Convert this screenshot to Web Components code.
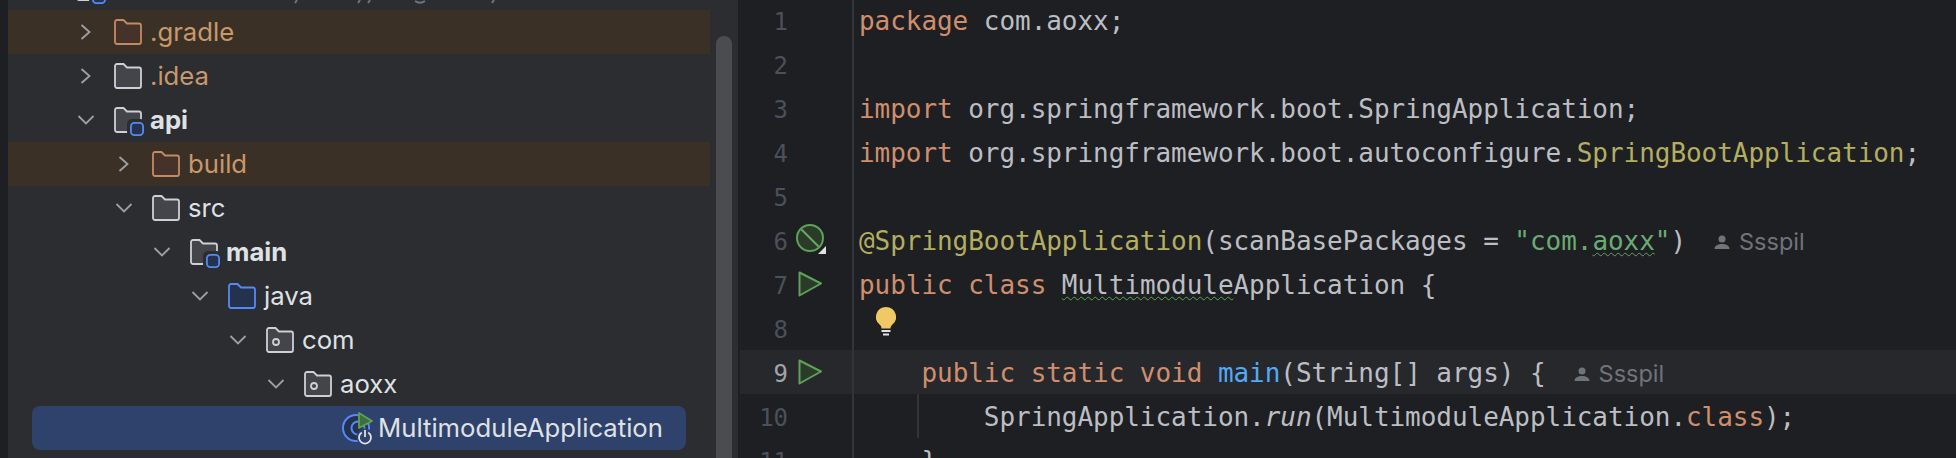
<!DOCTYPE html>
<html>
<head>
<meta charset="utf-8">
<style>
  html, body { margin: 0; height: 100%; background: #1e1f22; overflow: hidden; }
  ide-window { height: 458px; }
</style>
</head>
<body>
<ide-window>
  <project-tree slot="tree">
    <tree-row depth="-1" arrow="none" kind="module"></tree-row>
    <tree-row depth="0" arrow="right" kind="excluded" tone="orange" excluded>.gradle</tree-row>
    <tree-row depth="0" arrow="right" kind="plain" tone="orange">.idea</tree-row>
    <tree-row depth="0" arrow="down" kind="module" bold>api</tree-row>
    <tree-row depth="1" arrow="right" kind="excluded" tone="orange" excluded>build</tree-row>
    <tree-row depth="1" arrow="down" kind="plain">src</tree-row>
    <tree-row depth="2" arrow="down" kind="module" bold>main</tree-row>
    <tree-row depth="3" arrow="down" kind="source">java</tree-row>
    <tree-row depth="4" arrow="down" kind="package">com</tree-row>
    <tree-row depth="5" arrow="down" kind="package">aoxx</tree-row>
    <tree-row depth="6" arrow="none" kind="spring" selected>MultimoduleApplication</tree-row>
  </project-tree>
  <code-editor slot="editor"></code-editor>
</ide-window>

<script>
const FOLDER = 'M1 4A2 2 0 0 1 3 2h6.500l3.500 3.500h12A2 2 0 0 1 27 7.500v16.500a2 2 0 0 1-2 2h-22a2 2 0 0 1-2-2z';
const folder = (fill, stroke) => `<path d="${FOLDER}" fill="${fill}" stroke="${stroke}" stroke-width="1.800"/>`;
const ICONS = {
  plain: folder('#43454a', '#ced0d6'),
  excluded: folder('#45322b', '#c48a62'),
  source: folder('#25324d', '#548af7'),
  module: folder('#43454a', '#ced0d6') + `
    <rect x="13" y="13" width="18" height="18" rx="5" fill="#2b2d30"/>
    <rect x="16.900" y="16.900" width="12.200" height="12.200" rx="3.500" fill="#25324d" stroke="#548af7" stroke-width="1.800"/>`,
  package: folder('#43454a', '#ced0d6') + `
    <circle cx="10" cy="16" r="3" fill="none" stroke="#ced0d6" stroke-width="1.800"/>`,
  spring: `<circle cx="14" cy="14" r="13" fill="#25324d" stroke="#548af7" stroke-width="2"/>
    <circle cx="16" cy="14" r="6.500" fill="none" stroke="#548af7" stroke-width="2"/>
    <path d="M17 -1 30 7 17 14z" fill="#3f6e3b" stroke="#5fa05a" stroke-width="1.800" stroke-linejoin="round"/>
    <circle cx="23" cy="23" r="8.500" fill="#2f426c"/>
    <path d="M19.800 18.500a6 6 0 1 0 6.400 0" stroke="#dfe1e5" stroke-width="1.800" fill="none"/>
    <path d="M23 16v7" stroke="#dfe1e5" stroke-width="1.800" fill="none"/>`
};

class TreeRow extends HTMLElement {
  constructor() {
    super();
    const root = this.attachShadow({ mode: 'open' });
    const depth = +(this.getAttribute('depth') || 0);
    const arrow = this.getAttribute('arrow');
    const kind = this.getAttribute('kind');
    let chev = '';
    if (arrow === 'right') chev = '<path d="M5.500 3 13.500 10 5.500 17" />';
    if (arrow === 'down') chev = '<path d="M2.500 6 10 13.500 17.500 6" />';
    root.innerHTML = `
    <style>
      :host { display: block; height: 44px; position: relative; margin-right: 28px; --pad: ${68 + depth * 38}px; }
      :host([excluded]) { background: #3b3025; }
      .row { height: 44px; display: flex; align-items: center; padding-left: var(--pad); box-sizing: border-box; }
      :host([selected]) .row { background: #2f426c; border-radius: 8px; margin: 0 24px 0 24px; padding-left: calc(var(--pad) - 24px); }
      .arrow { width: 20px; height: 20px; margin-right: 18px; flex: none; }
      .arrow path { fill: none; stroke: #9da0a8; stroke-width: 1.800; }
      .icon { width: 28px; height: 28px; flex: none; margin-right: 8px; overflow: visible; }
      :host([tone="orange"]) .text { color: #c9986b; }
      :host([bold]) .text { font-weight: 700; }
      .text { color: #dfe1e5; font: 25.700px Inter, "Noto Sans", sans-serif; white-space: nowrap; padding-bottom: 2px; }
    </style>
    <div class="row">
      <svg class="arrow" viewBox="0 0 20 20">${chev}</svg>
      <svg class="icon" viewBox="0 0 28 28">${ICONS[kind] || ''}</svg>
      <span class="text"><slot></slot></span>
    </div>`;
  }
}

class ProjectTree extends HTMLElement {
  constructor() {
    super();
    this.attachShadow({ mode: 'open' }).innerHTML = `
    <style>
      :host { display: block; background: #2b2d30; overflow: hidden; border-left: 1px solid #1e1f22; height: 458px; position: relative; }
      .inner { margin-top: -34px; }
      .thumb { position: absolute; right: 6px; top: 36px; bottom: 0; width: 16px; background: #4b4c4f; border-radius: 8px 8px 0 0; }
      /* ends of the path text above, only the descenders show */
      .cut { position: absolute; left: 280px; top: 0; width: 240px; height: 4px; }
    </style>
    <div class="inner"><slot></slot></div>
    <svg class="cut" viewBox="0 0 240 4"><path d="M9 0 7 3M72 0 70 3M82 0 80 3M127 1C130 3 134 3 137 1M206 0 204 3" stroke="#6f737a" stroke-width="2" fill="none"/></svg>
    <div class="thumb"></div>`;
  }
}

class CodeLine extends HTMLElement {
  constructor() {
    super();
    const no = this.getAttribute('no');
    const mark = this.getAttribute('mark');
    let icon = '';
    if (mark === 'run') icon = `<svg class="mark" viewBox="0 0 28 28"><path d="M3.500 2.500 25 13.500 3.500 25.500z" fill="#2a3b27" stroke="#5fa05a" stroke-width="2" stroke-linejoin="round"/></svg>`;
    if (mark === 'off') icon = `<svg class="mark" viewBox="0 0 28 28" style="overflow:visible"><circle cx="14" cy="12" r="13" fill="#2a3b27" stroke="#5fa05a" stroke-width="2"/><path d="M5.500 3.500 22.500 20.500" stroke="#6ea768" stroke-width="2"/><path d="M22 28 30 20 30 28z" fill="#dfe1e5"/></svg>`;
    this.attachShadow({ mode: 'open' }).innerHTML = `
    <style>
      :host { display: grid; grid-template-columns: 114px 1fr; grid-template-rows: 44px; height: 44px; font: 26px/44px "DejaVu Sans Mono", "Liberation Mono", monospace; letter-spacing: -0.05px; color: #bcbec4; position: relative; }
      :host([current]) { background: #26282c; }
      .gutter { display: flex; align-items: center; border-right: 2px solid #313438; box-sizing: border-box; }
      .no { width: 48px; text-align: right; font-size: 24px; color: #4b5059; flex: none; padding-top: 4px; }
      :host([current]) .no { color: #a1a3ab; }
      .mark { width: 28px; height: 28px; margin-left: 8px; flex: none; }
      .code { white-space: pre; padding-left: 5px; position: relative; line-height: 46px; }
    </style>
    <div class="gutter"><span class="no">${no}</span>${icon}</div>
    <div class="code"><slot></slot></div>`;
  }
}

const HINT_ICON = `<svg viewBox="0 0 18 18"><circle cx="9" cy="5" r="3.500" fill="#6f737a"/><path d="M1.500 15c0-3.500 3.500-5 7.500-5s7.500 1.500 7.500 5z" fill="#6f737a"/></svg>`;

class CodeEditor extends HTMLElement {
  constructor() {
    super();
    this.attachShadow({ mode: 'open' }).innerHTML = `
    <style>
      :host { display: block; background: #1e1f22; height: 458px; overflow: hidden; padding-left: 2px; }
      .lines { margin-top: -2px; }
      .kw { color: #cf8e6d; }
      .ann { color: #b3ae60; }
      .str { color: #6aab73; }
      .fn { color: #56a8f5; }
      .it { font-style: italic; }
      .wavy { text-decoration: underline wavy #5fa05a 1.200px; text-underline-offset: 2px; }
      .hint { font: 23.500px Inter, "Noto Sans", sans-serif; letter-spacing: 0; color: #6f737a; margin-left: 27px; }
      .hint svg { width: 18px; height: 18px; margin-right: 8px; vertical-align: -2px; }
      .bulb { position: absolute; left: 22px; top: 1px; width: 20px; height: 29px; }
      .guide { position: absolute; left: 63px; top: 0; bottom: 0; border-left: 2px solid #313438; }
    </style>
    <div class="lines">
    <code-line no="1"><span class="kw">package</span> com.aoxx;</code-line>
    <code-line no="2"></code-line>
    <code-line no="3"><span class="kw">import</span> org.springframework.boot.SpringApplication;</code-line>
    <code-line no="4"><span class="kw">import</span> org.springframework.boot.autoconfigure.<span class="ann">SpringBootApplication</span>;</code-line>
    <code-line no="5"></code-line>
    <code-line no="6" mark="off"><span class="ann">@SpringBootApplication</span>(scanBasePackages = <span class="str">"com.<span class="wavy">aoxx</span>"</span>)<span class="hint">${HINT_ICON}Ssspil</span></code-line>
    <code-line no="7" mark="run"><span class="kw">public class</span> <span class="wavy">Multimodule</span>Application {</code-line>
    <code-line no="8"><svg class="bulb" viewBox="0 0 20 29"><path d="M10 0a10 10 0 0 0-6 18c1 1 1.500 2 1.500 3.500h9c0-1.500.500-2.500 1.500-3.500a10 10 0 0 0-6-18z" fill="#f0c966"/><path d="M5.500 24h9M7 27.500h6" stroke="#dfe1e5" stroke-width="2"/></svg></code-line>
    <code-line no="9" mark="run" current>    <span class="kw">public static void</span> <span class="fn">main</span>(String[] args) {<span class="hint">${HINT_ICON}Ssspil</span></code-line>
    <code-line no="10"><span class="guide"></span>        SpringApplication.<span class="it">run</span>(MultimoduleApplication.<span class="kw">class</span>);</code-line>
    <code-line no="11">    }</code-line>
    </div>`;
  }
}

class IdeWindow extends HTMLElement {
  constructor() {
    super();
    this.attachShadow({ mode: 'open' }).innerHTML = `
    <style>
      :host { display: grid; grid-template-columns: 7px 731px 1fr; background: #1e1f22; overflow: hidden; }
    </style>
    <div></div>
    <slot name="tree"></slot>
    <slot name="editor"></slot>`;
  }
}

customElements.define('tree-row', TreeRow);
customElements.define('project-tree', ProjectTree);
customElements.define('code-line', CodeLine);
customElements.define('code-editor', CodeEditor);
customElements.define('ide-window', IdeWindow);
</script>
</body>
</html>
